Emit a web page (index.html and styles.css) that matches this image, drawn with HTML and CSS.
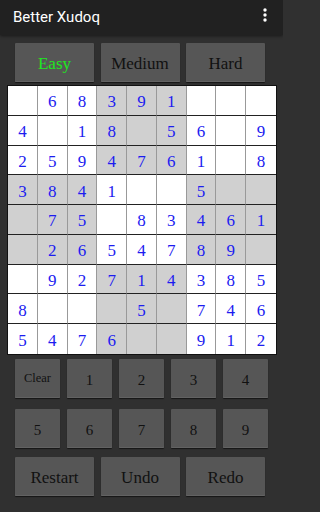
FILE: index.html
```html
<!DOCTYPE html>
<html>
<head>
<meta charset="utf-8">
<link rel="stylesheet" href="styles.css">
</head>
<body>
<div class="app">
<header class="appbar">
  <span class="title">Better Xudoq</span>
  <svg class="menu" width="4" height="14" viewBox="0 0 4 14"><circle cx="2" cy="2" r="1.7" fill="#fff"/><circle cx="2" cy="7" r="1.7" fill="#fff"/><circle cx="2" cy="12" r="1.7" fill="#fff"/></svg>
</header>
<main class="content">
  <div class="row3 diff">
    <button class="btn big easy">Easy</button>
    <button class="btn big">Medium</button>
    <button class="btn big">Hard</button>
  </div>
  <div class="board" id="board">
    <div class="c"></div><div class="c">6</div><div class="c">8</div><div class="c s">3</div><div class="c s">9</div><div class="c s">1</div><div class="c"></div><div class="c"></div><div class="c"></div>
    <div class="c">4</div><div class="c"></div><div class="c">1</div><div class="c s">8</div><div class="c s"></div><div class="c s">5</div><div class="c">6</div><div class="c"></div><div class="c">9</div>
    <div class="c">2</div><div class="c">5</div><div class="c">9</div><div class="c s">4</div><div class="c s">7</div><div class="c s">6</div><div class="c">1</div><div class="c"></div><div class="c">8</div>
    <div class="c s">3</div><div class="c s">8</div><div class="c s">4</div><div class="c">1</div><div class="c"></div><div class="c"></div><div class="c s">5</div><div class="c s"></div><div class="c s"></div>
    <div class="c s"></div><div class="c s">7</div><div class="c s">5</div><div class="c"></div><div class="c">8</div><div class="c">3</div><div class="c s">4</div><div class="c s">6</div><div class="c s">1</div>
    <div class="c s"></div><div class="c s">2</div><div class="c s">6</div><div class="c">5</div><div class="c">4</div><div class="c">7</div><div class="c s">8</div><div class="c s">9</div><div class="c s"></div>
    <div class="c"></div><div class="c">9</div><div class="c">2</div><div class="c s">7</div><div class="c s">1</div><div class="c s">4</div><div class="c">3</div><div class="c">8</div><div class="c">5</div>
    <div class="c">8</div><div class="c"></div><div class="c"></div><div class="c s"></div><div class="c s">5</div><div class="c s"></div><div class="c">7</div><div class="c">4</div><div class="c">6</div>
    <div class="c">5</div><div class="c">4</div><div class="c">7</div><div class="c s">6</div><div class="c s"></div><div class="c s"></div><div class="c">9</div><div class="c">1</div><div class="c">2</div>
  </div>
  <div class="pad">
    <button class="btn key clear">Clear</button>
    <button class="btn key">1</button>
    <button class="btn key">2</button>
    <button class="btn key">3</button>
    <button class="btn key">4</button>
  </div>
  <div class="pad pad2">
    <button class="btn key">5</button>
    <button class="btn key">6</button>
    <button class="btn key">7</button>
    <button class="btn key">8</button>
    <button class="btn key">9</button>
  </div>
  <div class="row3 actions">
    <button class="btn big">Restart</button>
    <button class="btn big">Undo</button>
    <button class="btn big">Redo</button>
  </div>
</main>
</div>
</body>
</html>
```

FILE: styles.css
```css
html, body {
  margin: 0;
  padding: 0;
  background: #303030;
}
.app {
  width: 283px;
  height: 512px;
  overflow: hidden;
}
.appbar {
  height: 35px;
  background: #212121;
  box-shadow: 0 1px 3px rgba(0,0,0,0.5);
  display: flex;
  align-items: center;
  justify-content: space-between;
  padding: 0 16px 0 13px;
  box-sizing: border-box;
  position: relative;
}
.title {
  color: #fff;
  font-family: Roboto, "Noto Sans", sans-serif;
  font-size: 15px;
  margin-top: -2px;
}
.menu {
  display: block;
  margin-top: -6px;
}
.content {
  display: flex;
  flex-direction: column;
}
.btn {
  background: #565656;
  border: none;
  border-radius: 1px;
  box-shadow: 0 1px 1px rgba(0,0,0,0.55), inset 0 -1px 0 #626262;
  color: #111;
  font-family: "Liberation Serif", "DejaVu Serif", serif;
  padding: 0;
  margin: 0;
  display: flex;
  align-items: center;
  justify-content: center;
}
.row3 {
  display: flex;
  gap: 6.5px;
  padding-left: 15px;
}
.big {
  width: 79px;
  height: 39px;
  font-size: 17px;
  padding-top: 2px;
}
.diff {
  margin-top: 8px;
}
.easy {
  color: #1fe61f;
}
.board {
  margin: 3px 0 0 7px;
  width: 270px;
  height: 270px;
  box-sizing: border-box;
  border: 1px solid #111;
  display: grid;
  grid-template-columns: repeat(9, 1fr);
  grid-template-rows: repeat(9, 1fr);
  background: #fff;
}
.c {
  border-right: 1px solid #999;
  border-bottom: 1px solid #222;
  display: flex;
  align-items: center;
  justify-content: center;
  padding-top: 4px;
  box-sizing: border-box;
  color: #1c1cf0;
  font-family: "Liberation Serif", "DejaVu Serif", serif;
  font-size: 17px;
}
.c:nth-child(9n) {
  border-right: none;
}
.c:nth-child(n+73) {
  border-bottom: none;
}
.s {
  background: #d0d0d0;
}
.pad {
  display: flex;
  gap: 7px;
  padding-left: 15px;
  margin-top: 4px;
}
.pad2 {
  margin-top: 11px;
}
.key {
  width: 45px;
  height: 39px;
  font-size: 15px;
  padding-top: 3px;
}
.clear {
  font-size: 12.5px;
  padding-top: 0;
}
.actions {
  margin-top: 9px;
}
```
